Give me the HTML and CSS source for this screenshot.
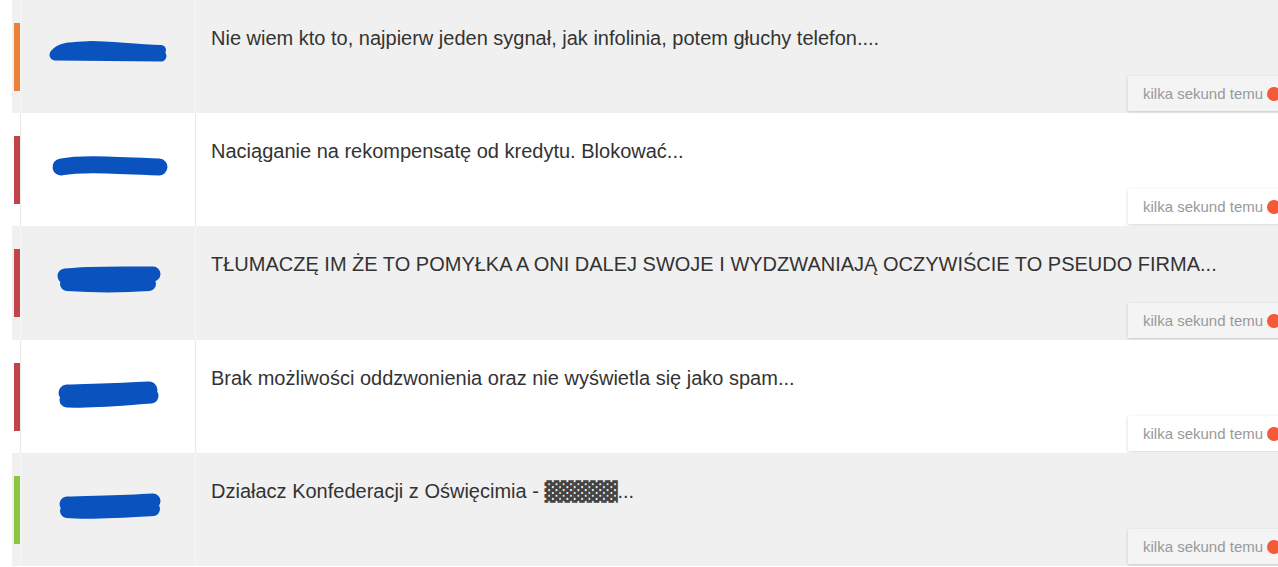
FILE: index.html
```html
<!DOCTYPE html>
<html lang="pl">
<head>
<meta charset="utf-8">
<link rel="stylesheet" href="styles.css">
</head>
<body>
<ul class="list">
  <li class="row gray">
    <span class="bar orange"></span>
    <div class="phone">
      <svg width="174" height="113" viewBox="0 0 174 113"><path d="M34 54 C40 46 55 47 70 46 C90 46 110 49 140 50" fill="none" stroke="#0a52bd" stroke-width="10" stroke-linecap="round"/><path d="M34 55 L140 56" fill="none" stroke="#0a52bd" stroke-width="11" stroke-linecap="round"/></svg>
    </div>
    <div class="msg">Nie wiem kto to, najpierw jeden sygnał, jak infolinia, potem głuchy telefon....</div>
    <div class="time">kilka sekund temu<span class="dot"></span></div>
  </li>
  <li class="row white">
    <span class="bar red"></span>
    <div class="phone">
      <svg width="174" height="113" viewBox="0 0 174 113"><path d="M40 54 C60 50 90 52 138 54" fill="none" stroke="#0a52bd" stroke-width="17" stroke-linecap="round"/></svg>
    </div>
    <div class="msg">Naciąganie na rekompensatę od kredytu. Blokować...</div>
    <div class="time">kilka sekund temu<span class="dot"></span></div>
  </li>
  <li class="row gray tall">
    <span class="bar red"></span>
    <div class="phone">
      <svg width="174" height="113" viewBox="0 0 174 113"><path d="M44 50 C70 47 100 48 132 48" fill="none" stroke="#0a52bd" stroke-width="15" stroke-linecap="round"/><path d="M46 58 C75 60 100 60 128 58" fill="none" stroke="#0a52bd" stroke-width="14" stroke-linecap="round"/></svg>
    </div>
    <div class="msg">TŁUMACZĘ IM ŻE TO POMYŁKA A ONI DALEJ SWOJE I WYDZWANIAJĄ OCZYWIŚCIE TO PSEUDO FIRMA...</div>
    <div class="time">kilka sekund temu<span class="dot"></span></div>
  </li>
  <li class="row white">
    <span class="bar red"></span>
    <div class="phone">
      <svg width="174" height="113" viewBox="0 0 174 113"><path d="M46 53 C70 52 90 52 128 50" fill="none" stroke="#0a52bd" stroke-width="17" stroke-linecap="round"/><path d="M46 60 C70 61 100 58 130 56" fill="none" stroke="#0a52bd" stroke-width="15" stroke-linecap="round"/></svg>
    </div>
    <div class="msg">Brak możliwości oddzwonienia oraz nie wyświetla się jako spam...</div>
    <div class="time">kilka sekund temu<span class="dot"></span></div>
  </li>
  <li class="row gray">
    <span class="bar green"></span>
    <div class="phone">
      <svg width="174" height="113" viewBox="0 0 174 113"><path d="M46 51 C70 50 100 50 132 48" fill="none" stroke="#0a52bd" stroke-width="15" stroke-linecap="round"/><path d="M46 58 C70 60 100 58 132 56" fill="none" stroke="#0a52bd" stroke-width="14" stroke-linecap="round"/></svg>
    </div>
    <div class="msg">Działacz Konfederacji z Oświęcimia - <span class="redact">▓▓▓▓▓</span>...</div>
    <div class="time">kilka sekund temu<span class="dot"></span></div>
  </li>
</ul>
</body>
</html>
```

FILE: styles.css
```css
html, body {
  margin: 0;
  padding: 0;
  background: #fff;
  overflow: hidden;
  font-family: "Liberation Sans", Arial, sans-serif;
}

.list {
  list-style: none;
  margin: 0;
  padding: 0 0 0 12px;
}

.row {
  position: relative;
  display: flex;
  height: 113px;
  padding-left: 2px;
}

.row.tall { height: 114px; }

.row.gray { background: #f0f0f0; }
.row.white { background: #fff; }

.bar {
  width: 6px;
  height: 68px;
  align-self: center;
  flex: none;
}

.orange { background: #ec8139; }
.red { background: #c1444a; }
.green { background: #8cc641; }

.phone {
  flex: none;
  width: 174px;
  border-left: 1px solid #e9e9e9;
  border-right: 1px solid #e9e9e9;
}

.gray .phone {
  border-color: #f7f7f7;
}

.phone svg { display: block; }

.msg {
  padding: 27px 0 0 15px;
  font-size: 20px;
  line-height: 22px;
  color: #333;
  white-space: nowrap;
}

.redact {
  font-family: "DejaVu Sans", sans-serif;
  font-size: 19px;
  color: #444;
  letter-spacing: 0;
}

.time {
  position: absolute;
  left: 1116px;
  bottom: 2px;
  width: 175px;
  height: 35px;
  box-sizing: border-box;
  padding-left: 15px;
  display: flex;
  align-items: center;
  font-size: 15px;
  color: #999;
  background: #f4f4f4;
  box-shadow: 0 1px 3px rgba(0, 0, 0, 0.18);
}

.white .time { background: #fff; }

.dot {
  width: 14px;
  height: 14px;
  border-radius: 50%;
  background: #f35a3a;
  margin-left: 4px;
  flex: none;
}
```
